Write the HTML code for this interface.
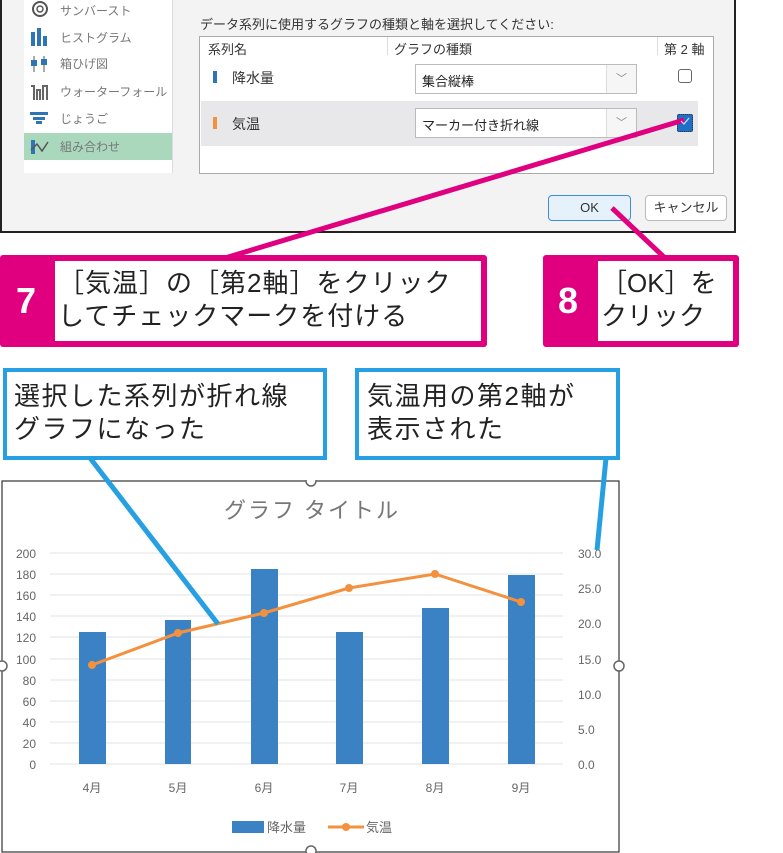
<!DOCTYPE html>
<html><head><meta charset="utf-8"><style>
*{margin:0;padding:0;box-sizing:border-box}
body{width:783px;height:853px;background:#fff;position:relative;overflow:hidden;font-family:"Liberation Sans","Noto Sans CJK JP",sans-serif;color:#333}
.a{position:absolute}
.dlg{left:0;top:-2px;width:736px;height:235px;border:2px solid #222;border-top:none;background:#f3f3f3}
.side{left:24px;top:0;width:148px;height:173px;background:#fff}
.side div{position:absolute;left:36px;font-size:12px;color:#777;white-space:nowrap}
.tb{left:199px;top:36px;width:515px;height:138px;border:1px solid #aaa;background:#fff}
.dd{background:#fff;border:1px solid #bbb;font-size:13px;padding:6px 6px;color:#222}
.btn{border:1px solid #bbb;border-radius:4px;background:#fff;font-size:13px;text-align:center;line-height:24px}
.pk{background:#e0007f}
.cap{font-size:26px;color:#222;line-height:33px;letter-spacing:1.5px;white-space:nowrap}
.bl{border:4px solid #26a0e3;background:#fff}
</style></head><body>
<div class="a dlg"></div>
<div class="a side">
<div style="top:2px">サンバースト</div>
<div style="top:29px">ヒストグラム</div>
<div style="top:55px">箱ひげ図</div>
<div style="top:83px">ウォーターフォール</div>
<div style="top:110px">じょうご</div>
<div style="left:0;top:133px;width:148px;height:27px;background:#a9d8bd"></div>
<div style="top:138px">組み合わせ</div>
</div>
<svg class="a" style="left:28px;top:0" width="24" height="165">
<circle cx="12" cy="9" r="7" fill="none" stroke="#555" stroke-width="2"/><circle cx="12" cy="9" r="3" fill="none" stroke="#555" stroke-width="1.5"/>
<rect x="3" y="32" width="4" height="14" fill="#2e75b6"/><rect x="9" y="28" width="4" height="18" fill="#2e75b6"/><rect x="15" y="36" width="4" height="10" fill="#2e75b6"/>
<path d="M6 56v16M16 56v16" stroke="#555"/><rect x="3" y="60" width="6" height="6" fill="#2e75b6"/><rect x="13" y="59" width="6" height="6" fill="#2e75b6"/>
<path d="M3 86h3v14M9 100V90h3v10M15 100V86h4v14" stroke="#666" fill="none" stroke-width="2"/>
<path d="M2 112h18v3H2zM5 117h12v3H5zM8 121h6v3H8z" fill="#2e75b6"/>
<rect x="3" y="140" width="4" height="14" fill="#2e75b6"/><path d="M3 150l6-6 5 7 6-9" stroke="#555" fill="none" stroke-width="1.5"/>
</svg>
<div class="a" style="left:172px;top:0;width:1px;height:173px;background:#ddd"></div>
<div class="a" style="left:200px;top:14px;font-size:13px;color:#333">データ系列に使用するグラフの種類と軸を選択してください:</div>
<div class="a tb">
<div class="a" style="left:8px;top:2px;font-size:13px">系列名</div>
<div class="a" style="left:187px;top:0;width:1px;height:18px;background:#ddd"></div>
<div class="a" style="left:194px;top:2px;font-size:13px">グラフの種類</div>
<div class="a" style="left:457px;top:0;width:1px;height:18px;background:#ddd"></div>
<div class="a" style="left:464px;top:2px;font-size:13px">第 2 軸</div>
<div class="a" style="left:13px;top:34px;width:4px;height:12px;background:#2e75b6"></div>
<div class="a" style="left:32px;top:31px;font-size:14px">降水量</div>
<div class="a" style="left:1px;top:64px;width:497px;height:45px;background:#e8e8ea"></div>
<div class="a" style="left:13px;top:80px;width:4px;height:12px;background:#f4913e"></div>
<div class="a" style="left:32px;top:77px;font-size:14px">気温</div>
<div class="a dd" style="left:215px;top:27px;width:222px;height:30px">集合縦棒</div>
<div class="a dd" style="left:215px;top:71px;width:222px;height:30px">マーカー付き折れ線</div>
<div class="a" style="left:406px;top:28px;width:30px;height:28px;background:#f6f6f6;border-left:1px solid #ddd;text-align:center;color:#888;font-size:11px;line-height:28px">﹀</div>
<div class="a" style="left:406px;top:72px;width:30px;height:28px;background:#f6f6f6;border-left:1px solid #ddd;text-align:center;color:#888;font-size:11px;line-height:28px">﹀</div>
<div class="a" style="left:478px;top:32px;width:14px;height:14px;border:1px solid #666;border-radius:3px;background:#fff"></div>
<div class="a" style="left:477px;top:77px;width:16px;height:18px;border:1px dotted #333;background:#1f6fc6;border-radius:2px"></div>
</div>
<div class="a btn" style="left:548px;top:195px;width:83px;height:26px;background:#e5f1fb;border-color:#3c8fd6">OK</div>
<div class="a btn" style="left:645px;top:195px;width:82px;height:26px">キャンセル</div>
<svg class="a" style="left:0;top:480px" width="783" height="373" font-family="Liberation Sans,Noto Sans CJK JP,sans-serif">
<rect x="2" y="1" width="617" height="371" fill="#fff" stroke="#333" stroke-width="1.2"/>
<text x="312" y="38" font-size="22" fill="#777" text-anchor="middle" letter-spacing="2">グラフ タイトル</text>
<g stroke="#e3e3e3" stroke-width="1">
<line x1="50" x2="563" y1="73" y2="73"/><line x1="50" x2="563" y1="94" y2="94"/><line x1="50" x2="563" y1="115" y2="115"/><line x1="50" x2="563" y1="136" y2="136"/><line x1="50" x2="563" y1="157" y2="157"/><line x1="50" x2="563" y1="179" y2="179"/><line x1="50" x2="563" y1="200" y2="200"/><line x1="50" x2="563" y1="221" y2="221"/><line x1="50" x2="563" y1="242" y2="242"/><line x1="50" x2="563" y1="263" y2="263"/><line x1="50" x2="563" y1="284" y2="284"/></g>
<g font-size="12" fill="#666" text-anchor="end">
<text x="36" y="78">200</text><text x="36" y="99">180</text><text x="36" y="120">160</text><text x="36" y="141">140</text><text x="36" y="162">120</text><text x="36" y="184">100</text><text x="36" y="205">80</text><text x="36" y="226">60</text><text x="36" y="247">40</text><text x="36" y="268">20</text><text x="36" y="289">0</text></g>
<g font-size="12" fill="#666">
<text x="578" y="78">30.0</text><text x="578" y="113">25.0</text><text x="578" y="148">20.0</text><text x="578" y="184">15.0</text><text x="578" y="219">10.0</text><text x="578" y="254">5.0</text><text x="578" y="289">0.0</text></g>
<g fill="#3a82c4">
<rect x="79" y="152" width="27" height="132"/><rect x="165" y="140" width="26" height="144"/><rect x="251" y="89" width="27" height="195"/><rect x="336" y="152" width="27" height="132"/><rect x="422" y="128" width="27" height="156"/><rect x="508" y="95" width="27" height="189"/></g>
<polyline points="92,185 178,153 264,133 349,108 435,94 521,122" fill="none" stroke="#f4913e" stroke-width="3"/>
<g fill="#f4913e"><circle cx="92" cy="185" r="4"/><circle cx="178" cy="153" r="4"/><circle cx="264" cy="133" r="4"/><circle cx="349" cy="108" r="4"/><circle cx="435" cy="94" r="4"/><circle cx="521" cy="122" r="4"/></g>
<g font-size="12" fill="#666" text-anchor="middle"><text x="92" y="312">4月</text><text x="178" y="312">5月</text><text x="264" y="312">6月</text><text x="349" y="312">7月</text><text x="435" y="312">8月</text><text x="521" y="312">9月</text></g>
<rect x="232" y="341" width="32" height="12" fill="#3a82c4"/>
<text x="267" y="352" font-size="13" fill="#666">降水量</text>
<line x1="328" y1="347" x2="364" y2="347" stroke="#f4913e" stroke-width="3"/><circle cx="346" cy="347" r="4" fill="#f4913e"/>
<text x="366" y="352" font-size="13" fill="#666">気温</text>
<g fill="#fff" stroke="#666" stroke-width="1.5"><circle cx="311" cy="1" r="5"/><circle cx="311" cy="371" r="5"/><circle cx="2" cy="186" r="5"/><circle cx="619" cy="186" r="5"/></g>
</svg>
<svg class="a" style="left:0;top:0" width="783" height="853">
<line x1="225" y1="258" x2="684" y2="120" stroke="#e0007f" stroke-width="5"/>
<line x1="665" y1="258" x2="612" y2="208" stroke="#e0007f" stroke-width="5"/>
<line x1="90" y1="458" x2="218" y2="624" stroke="#26a0e3" stroke-width="5"/>
<line x1="606" y1="458" x2="597" y2="550" stroke="#26a0e3" stroke-width="5"/>
<path d="M681 121l3 3 5-6" stroke="#cfe3f7" fill="none" stroke-width="1.2"/>
</svg>
<div class="a pk" style="left:0;top:255px;width:487px;height:92px;border-radius:3px"></div>
<div class="a" style="left:55px;top:261px;width:426px;height:80px;background:#fff"></div>
<div class="a" style="left:16px;top:280px;color:#fff;font-size:36px;font-weight:bold">7</div>
<div class="a cap" style="left:58px;top:267px;letter-spacing:1px">［気温］の［第2軸］をクリック<br>してチェックマークを付ける</div>
<div class="a pk" style="left:543px;top:255px;width:196px;height:92px;border-radius:3px"></div>
<div class="a" style="left:598px;top:261px;width:135px;height:80px;background:#fff"></div>
<div class="a" style="left:558px;top:280px;color:#fff;font-size:36px;font-weight:bold">8</div>
<div class="a cap" style="left:601px;top:267px;letter-spacing:0">［OK］を<br>クリック</div>
<div class="a bl" style="left:3px;top:368px;width:324px;height:92px"></div>
<div class="a cap" style="left:14px;top:380px">選択した系列が折れ線<br>グラフになった</div>
<div class="a bl" style="left:355px;top:368px;width:265px;height:92px"></div>
<div class="a cap" style="left:367px;top:380px">気温用の第2軸が<br>表示された</div>
</body></html>
